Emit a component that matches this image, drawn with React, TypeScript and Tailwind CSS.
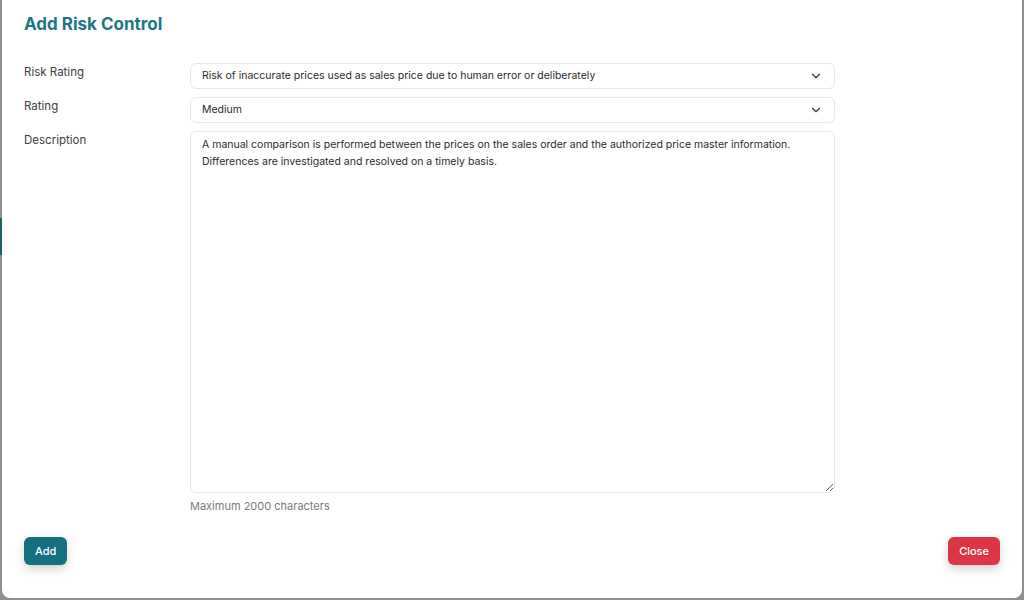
import React from 'react';

const Chevron: React.FC = () => (
  <svg width="14" height="14" viewBox="0 0 24 24" fill="none" stroke="#333" strokeWidth="2" strokeLinecap="round" strokeLinejoin="round">
    <path d="M6 9l6 6 6-6" />
  </svg>
);

interface SelectBoxProps {
  value: string;
}

const SelectBox: React.FC<SelectBoxProps> = ({ value }) => (
  <div className="flex h-[26px] items-center justify-between rounded-md border border-[#e6e6e6] bg-white pl-[11px] pr-[11px] text-[10.5px] text-[#2b2b2b]">
    <span>{value}</span>
    <Chevron />
  </div>
);

const App: React.FC = () => {
  return (
    <div className="flex h-[600px] w-[1024px] overflow-hidden bg-[#8f8f8f] font-['Inter',sans-serif]">
      <div className="flex w-[2px] flex-col pt-[218px]">
        <div className="h-[37px] bg-[#1d5f6b]" />
      </div>
      <div className="flex h-[598px] w-[1020px] flex-col rounded-b-lg bg-white px-[22px]">
        <h2 className="mt-[12px] text-[17px] font-bold text-[#1b7885]">Add Risk Control</h2>

        <div className="mt-[25px] grid grid-cols-[166px_645px] gap-y-[8px]">
          <label className="pt-[1px] text-[11.5px] text-[#404040]">Risk Rating</label>
          <SelectBox value="Risk of inaccurate prices used as sales price due to human error or deliberately" />

          <label className="pt-[1px] text-[11.5px] text-[#404040]">Rating</label>
          <SelectBox value="Medium" />

          <label className="pt-[1px] text-[11.5px] text-[#404040]">Description</label>
          <div>
            <textarea
              className="block h-[362px] w-full resize-y rounded-md border border-[#e6e6e6] px-[11px] py-[4px] text-[10.5px] leading-[17px] text-[#2b2b2b] outline-none"
              defaultValue={
                'A manual comparison is performed between the prices on the sales order and the authorized price master information.\nDifferences are investigated and resolved on a timely basis.'
              }
            />
            <p className="mt-[5px] text-[11px] text-[#7a7a7a]">Maximum 2000 characters</p>
          </div>
        </div>

        <div className="mt-auto mb-[33px] flex items-center justify-between">
          <button className="h-[28px] rounded-md bg-[#13707f] px-[11px] text-[11px] font-medium text-white shadow-[0_4px_10px_rgba(0,0,0,0.18)]">
            Add
          </button>
          <button className="h-[28px] rounded-md bg-[#dc3545] px-[11px] text-[11px] font-medium text-white shadow-[0_4px_10px_rgba(0,0,0,0.18)]">
            Close
          </button>
        </div>
      </div>
    </div>
  );
};

export default App;
